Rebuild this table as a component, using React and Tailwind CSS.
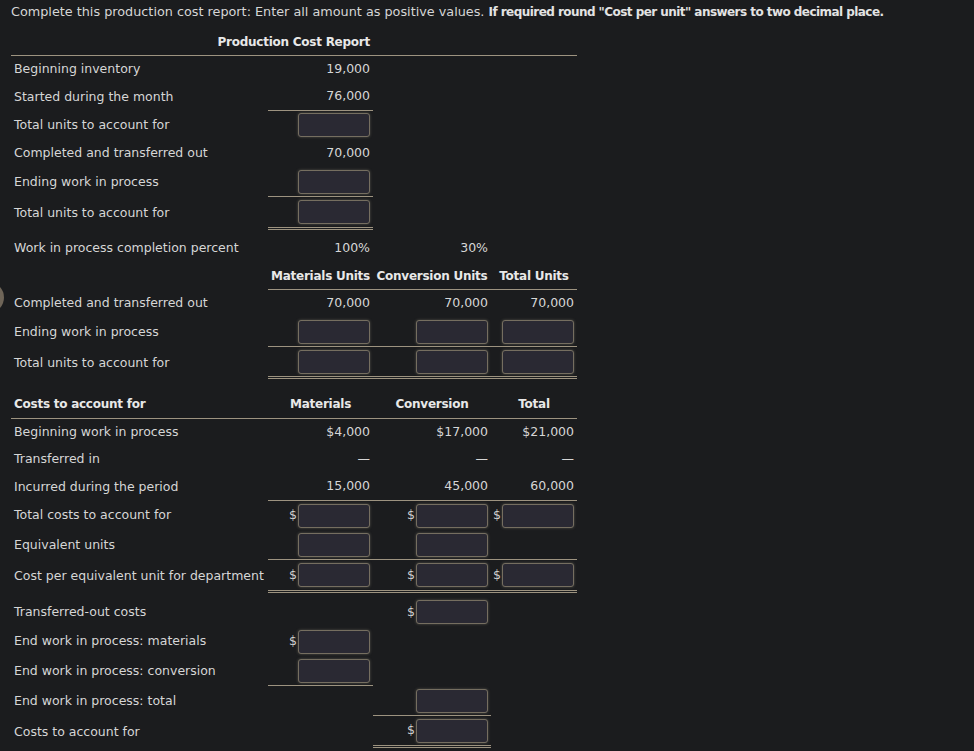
import React from "react";

const GRID = "grid grid-cols-[257px_105px_118px_86px]";
const LINE = "border-b border-[#9d9380]";
const DOUBLE = "border-b-[3px] border-double border-[#9d9380]";
const BOLD = "font-bold text-[12px] tracking-[-0.25px] text-[#e8e8e8]";

function Box({ dollar }) {
  return (
    <div className="flex items-center">
      {dollar && <span className="mr-[1px] text-[#cfcfcf]">$</span>}
      <input
        readOnly
        className="w-[72px] h-[24px] rounded-[3px] border border-[#756e60] bg-[#2a2933] shadow-[0_0_3px_rgba(190,180,160,0.35)] outline-none"
      />
    </div>
  );
}

// one table row: label + three value cells, each cell can carry its own rule
function Row({ h, label, cells = [], lines = [] }) {
  return (
    <div className={`${GRID} ${h}`}>
      <div className="flex items-center pl-[3px] whitespace-nowrap">{label}</div>
      {[0, 1, 2].map((i) => (
        <div
          key={i}
          className={`flex items-center justify-end pr-[3px] whitespace-nowrap ${lines[i] || ""}`}
        >
          {cells[i]}
        </div>
      ))}
    </div>
  );
}

function Head({ children }) {
  return <div className={`w-full text-center whitespace-nowrap ${BOLD}`}>{children}</div>;
}

export default function App() {
  return (
    <div className="relative min-h-[751px] pt-[1px] bg-[#1b1c1e] text-[#d6d6d6] text-[12.5px] font-['DejaVu_Sans',Verdana,sans-serif] overflow-hidden">
      <div className="absolute -left-[27px] top-[282px] w-[31px] h-[31px] rounded-full bg-[#6f6558]" />

      <div className="h-[22px] flex items-center pl-[11px] whitespace-nowrap text-[12.8px]">
        Complete this production cost report: Enter all amount as positive values.&nbsp;
        <span className="font-bold text-[12px] tracking-[-0.55px] text-[#e3e3e3]">
          If required round "Cost per unit" answers to two decimal place.
        </span>
      </div>

      <div className="ml-[11px] mt-[5px] w-[566px]">
        {/* units section */}
        <div className={`${GRID} h-[28px] ${LINE}`}>
          <div className={`col-span-2 flex items-center justify-end pr-[3px] ${BOLD}`}>
            Production Cost Report
          </div>
        </div>
        <Row h="h-[27px]" label="Beginning inventory" cells={["19,000"]} />
        <Row h="h-[28px]" label="Started during the month" cells={["76,000"]} lines={[LINE]} />
        <Row h="h-[28px]" label="Total units to account for" cells={[<Box />]} />
        <Row h="h-[28px]" label="Completed and transferred out" cells={["70,000"]} />
        <Row h="h-[30px]" label="Ending work in process" cells={[<Box />]} lines={[LINE]} />
        <Row h="h-[33px]" label="Total units to account for" cells={[<Box />]} lines={[DOUBLE]} />

        <div className="h-[4px]" />
        <Row h="h-[28px]" label="Work in process completion percent" cells={["100%", "30%"]} />

        <div className={`${GRID} h-[28px]`}>
          <div />
          <div className={`flex items-center ${LINE}`}><Head>Materials Units</Head></div>
          <div className={`flex items-center ${LINE}`}><Head>Conversion Units</Head></div>
          <div className={`flex items-center ${LINE}`}><Head>Total Units</Head></div>
        </div>
        <Row h="h-[27px]" label="Completed and transferred out" cells={["70,000", "70,000", "70,000"]} />
        <Row h="h-[30px]" label="Ending work in process" cells={[<Box />, <Box />, <Box />]} lines={[LINE, LINE, LINE]} />
        <Row h="h-[32px]" label="Total units to account for" cells={[<Box />, <Box />, <Box />]} lines={[DOUBLE, DOUBLE, DOUBLE]} />

        <div className="h-[11px]" />

        {/* costs section */}
        <div className={`${GRID} h-[29px] ${LINE}`}>
          <div className={`flex items-center pl-[3px] ${BOLD}`}>Costs to account for</div>
          <div className="flex items-center"><Head>Materials</Head></div>
          <div className="flex items-center"><Head>Conversion</Head></div>
          <div className="flex items-center"><Head>Total</Head></div>
        </div>
        <Row h="h-[27px]" label="Beginning work in process" cells={["$4,000", "$17,000", "$21,000"]} />
        <Row h="h-[27px]" label="Transferred in" cells={["—", "—", "—"]} />
        <Row h="h-[28px]" label="Incurred during the period" cells={["15,000", "45,000", "60,000"]} lines={[LINE, LINE, LINE]} />
        <Row h="h-[29px]" label="Total costs to account for" cells={[<Box dollar />, <Box dollar />, <Box dollar />]} />
        <Row h="h-[30px]" label="Equivalent units" cells={[<Box />, <Box />]} lines={[LINE, LINE, LINE]} />
        <Row
          h="h-[33px]"
          label="Cost per equivalent unit for department"
          cells={[<Box dollar />, <Box dollar />, <Box dollar />]}
          lines={[DOUBLE, DOUBLE, DOUBLE]}
        />

        <div className="h-[4px]" />
        <Row h="h-[30px]" label="Transferred-out costs" cells={[null, <Box dollar />]} />
        <Row h="h-[29px]" label="End work in process: materials" cells={[<Box dollar />]} />
        <Row h="h-[30px]" label="End work in process: conversion" cells={[<Box />]} lines={[LINE]} />
        <Row h="h-[30px]" label="End work in process: total" cells={[null, <Box />]} lines={[null, LINE]} />
        <Row h="h-[32px]" label="Costs to account for" cells={[null, <Box dollar />]} lines={[null, DOUBLE]} />
      </div>
    </div>
  );
}
